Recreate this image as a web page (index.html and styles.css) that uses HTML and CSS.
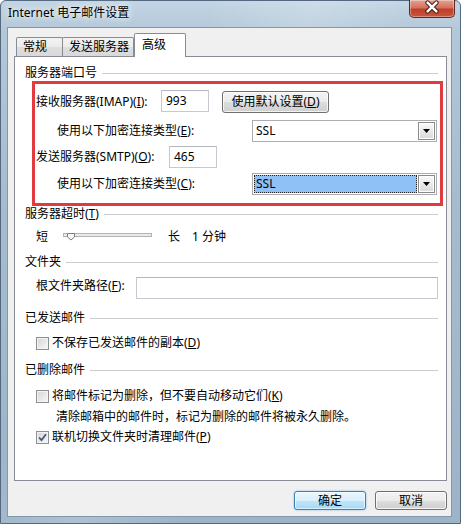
FILE: index.html
```html
<!DOCTYPE html>
<html lang="zh-CN">
<head>
<meta charset="utf-8">
<title>Internet 电子邮件设置</title>
<link rel="stylesheet" href="styles.css">
</head>
<body>
<div class="window">
  <div class="titlebar">
    <span class="title">Internet 电子邮件设置</span>
    <div class="close">
      <svg width="46" height="18" viewBox="0 0 46 18">
        <path d="M19 3.5 L28 12.5 M28 3.5 L19 12.5" stroke="#4a1b14" stroke-width="4.6" stroke-linecap="round"/>
        <path d="M19 3.5 L28 12.5 M28 3.5 L19 12.5" stroke="#ffffff" stroke-width="2.6" stroke-linecap="round"/>
      </svg>
    </div>
  </div>
  <div class="client">
    <div class="tabs">
      <div class="tab t1">常规</div>
      <div class="tab t2">发送服务器</div>
      <div class="tab active">高级</div>
    </div>
    <div class="panel">
      <div class="group-head"><span>服务器端口号</span><i class="rule"></i></div>
      <div class="highlight">
        <div class="row r1">
          <span class="lbl l-imap">接收服务器(IMAP)(<u>I</u>):</span>
          <div class="input short top">993</div>
          <div class="btn defset">使用默认设置(<u>D</u>)</div>
        </div>
        <div class="row r2">
          <span class="lbl l-enc">使用以下加密连接类型(<u>E</u>):</span>
          <div class="select"><span class="val">SSL</span><span class="drop"><svg width="7" height="4" viewBox="0 0 7 4"><path d="M0 0 H7 L3.5 4 Z" fill="#000"/></svg></span></div>
        </div>
        <div class="row r3">
          <span class="lbl l-smtp">发送服务器(SMTP)(<u>O</u>):</span>
          <div class="input short">465</div>
        </div>
        <div class="row r4">
          <span class="lbl l-enc">使用以下加密连接类型(<u>C</u>):</span>
          <div class="select"><span class="val focused">SSL</span><span class="drop"><svg width="7" height="4" viewBox="0 0 7 4"><path d="M0 0 H7 L3.5 4 Z" fill="#000"/></svg></span></div>
        </div>
      </div>

      <div class="group-head"><span>服务器超时(<u>T</u>)</span><i class="rule"></i></div>
      <div class="slider-row">
        <span>短</span>
        <svg class="slider" width="89" height="8" viewBox="0 0 89 8">
          <rect x="0.5" y="0.5" width="88" height="3" fill="#e9e9e9" stroke="#b4b4b4"/>
          <path d="M4.5 0.5 H11.5 V4 L8 7 L4.5 4 Z" fill="#f6f6f6" stroke="#7e7e7e"/>
        </svg>
        <span class="long">长</span>
        <span class="minutes">1 分钟</span>
      </div>

      <div class="group-head gh-folder"><span>文件夹</span><i class="rule"></i></div>
      <div class="folder-row">
        <span class="lbl l-root">根文件夹路径(<u>F</u>):</span>
        <div class="input wide"></div>
      </div>

      <div class="group-head gh-sent"><span>已发送邮件</span><i class="rule"></i></div>
      <div class="check-row cr1"><span class="cb"></span><span>不保存已发送邮件的副本(<u>D</u>)</span></div>

      <div class="group-head gh-del"><span>已删除邮件</span><i class="rule"></i></div>
      <div class="check-row cr2"><span class="cb"></span><span>将邮件标记为删除，但不要自动移动它们(<u>K</u>)</span></div>
      <div class="note">清除邮箱中的邮件时，标记为删除的邮件将被永久删除。</div>
      <div class="check-row cr3"><span class="cb checked"><svg width="11" height="11" viewBox="0 0 11 11"><path d="M2 5.5 L4.5 8.2 L9 2.2" fill="none" stroke="#3b5584" stroke-width="1.8"/></svg></span><span>联机切换文件夹时清理邮件(<u>P</u>)</span></div>
    </div>
    <div class="actions">
      <div class="btn action primary">确定</div>
      <div class="btn action">取消</div>
    </div>
  </div>
</div>
</body>
</html>
```
FILE: styles.css
```css
* { box-sizing: border-box; }
html, body { margin: 0; padding: 0; }
body {
  width: 461px;
  height: 524px;
  overflow: hidden;
  font-family: "Noto Sans", "Noto Sans CJK SC", sans-serif;
  font-size: 12px;
  line-height: 16px;
  color: #000;
}
u { text-decoration: underline; text-underline-offset: 1px; }

.window {
  width: 461px;
  height: 524px;
  display: flex;
  flex-direction: column;
  background:
    linear-gradient(115deg, rgba(255,255,255,0) 30%, rgba(255,255,255,0.18) 45%, rgba(255,255,255,0) 60%),
    linear-gradient(180deg, #c3d5e4 0%, #b2c7d8 6%, #a6bcce 40%, #9db4c8 100%);
  border: 1px solid #54697f;
  border-radius: 6px 6px 0 0;
}

.titlebar {
  height: 26px;
  display: flex;
  justify-content: space-between;
  align-items: flex-start;
}
.title {
  padding: 4px 0 0 7px;
  line-height: 16px;
  text-shadow: 0 0 6px #fff, 0 0 10px rgba(255,255,255,0.8);
}
.close {
  width: 46px;
  height: 18px;
  margin: -1px 5px 0 0;
  border: 1px solid #5d2a22;
  border-top: none;
  border-radius: 0 0 5px 5px;
  background: linear-gradient(180deg, #e6a293 0%, #d3715e 45%, #c0402a 55%, #c8553c 100%);
  box-shadow: inset 0 0 0 1px rgba(255,255,255,0.35);
  display: flex;
}
.close svg { display: block; margin: -1px 0 0 -1px; }

.client {
  height: 490px;
  margin: 0 8px 0 6px;
  background: #f0f0f0;
  border: 1px solid #8396ab;
  padding: 5px 4px 6px 6px;
  display: flex;
  flex-direction: column;
}

.tabs {
  height: 23px;
  display: flex;
  align-items: flex-end;
  padding-left: 2px;
}
.tab {
  height: 19px;
  border: 1px solid #898c95;
  border-bottom: none;
  border-radius: 2px 2px 0 0;
  background: linear-gradient(180deg, #f3f3f3 0%, #ebebeb 50%, #dedede 51%, #d9d9d9 100%);
  line-height: 18px;
  padding-left: 6px;
  white-space: nowrap;
}
.t1 { width: 47px; }
.t2 { width: 72px; margin-left: -1px; }
.tab.active {
  width: 52px;
  height: 24px;
  margin-bottom: -1px;
  background: #fff;
  line-height: 22px;
  padding-left: 7px;
  position: relative;
  z-index: 1;
}

.panel {
  height: 426px;
  background: #fff;
  border: 1px solid #898c95;
  padding-top: 8px;
}

.group-head {
  height: 16px;
  display: flex;
  align-items: center;
  padding: 0 8px 0 10px;
  white-space: nowrap;
}
.rule {
  flex: 1;
  height: 1px;
  margin-left: 5px;
  background: #c9cdd2;
}

.highlight {
  width: 411px;
  margin-left: 17px;
  border: 3px solid #e13b40;
  padding: 6px 0 8px 1px;
}
.row { display: flex; white-space: nowrap; }
.r1 { height: 23px; align-items: center; }
.r2 { height: 22px; margin-top: 7px; align-items: center; }
.r3 { height: 22px; margin-top: 4px; align-items: center; }
.r4 { height: 22px; margin-top: 5px; align-items: center; }
.lbl { display: block; white-space: nowrap; }
.l-imap { width: 125px; }
.l-smtp { width: 133px; }
.l-enc { width: 216px; padding-left: 21px; }

.input {
  height: 22px;
  background: #fff;
  border: 1px solid #c6c9cf;
  border-top-color: #b3b6bd;
  padding: 2px 0 0 4px;
}
.short { width: 48px; }
.r1 .input { align-self: flex-start; }

.btn {
  height: 22px;
  border: 1px solid #707070;
  border-radius: 3px;
  background: linear-gradient(180deg, #f3f3f3 0%, #ebebeb 50%, #dddddd 51%, #cfcfcf 100%);
  box-shadow: inset 0 0 0 1px rgba(255,255,255,0.75);
  display: flex;
  align-items: center;
  justify-content: center;
  white-space: nowrap;
}
.defset { width: 107px; margin-left: 13px; align-self: flex-end; }

.select {
  width: 185px;
  height: 22px;
  border: 1px solid #abadb3;
  background: #fff;
  display: flex;
  align-items: center;
  padding: 1px 1px 1px 1px;
}
.val {
  flex: 1;
  height: 18px;
  line-height: 17px;
  padding-left: 2px;
}
.val.focused {
  background: #8fc1f7;
  outline: 1px dotted #222;
  outline-offset: -1px;
}
.drop {
  width: 17px;
  height: 18px;
  margin-left: 1px;
  border: 1px solid #8a8a8a;
  background: linear-gradient(180deg, #fafafa 0%, #e9e9e9 50%, #d9d9d9 100%);
  box-shadow: inset 0 0 0 1px #fff;
  display: flex;
  align-items: center;
  justify-content: center;
}
.drop svg { display: block; }

.slider-row {
  height: 16px;
  margin-top: 7px;
  padding-left: 21px;
  display: flex;
  align-items: flex-start;
  white-space: nowrap;
}
.slider { display: block; margin: 4px 0 0 15px; }
.long { margin-left: 16px; }
.minutes { margin-left: 12px; }

.gh-folder { margin-top: 9px; }
.folder-row {
  height: 22px;
  margin-top: 7px;
  padding-left: 21px;
  display: flex;
  align-items: flex-start;
}
.l-root { width: 100px; margin-top: 1px; }
.wide { width: 302px; }

.gh-sent { margin-top: 11px; }
.gh-del { margin-top: 11px; }

.check-row {
  height: 16px;
  padding-left: 21px;
  display: flex;
  align-items: center;
  white-space: nowrap;
}
.cr1 { margin-top: 9px; }
.cr2 { margin-top: 10px; }
.cr3 { margin-top: 4px; }
.cb {
  width: 13px;
  height: 13px;
  margin-right: 3px;
  border: 1px solid #8e8f8f;
  background: linear-gradient(135deg, #d4d4d4 0%, #e8e8e8 55%, #f7f7f7 100%);
  box-shadow: inset 0 0 0 1px #f4f4f4;
  display: flex;
  align-items: center;
  justify-content: center;
}
.cb svg { display: block; }
.note {
  height: 16px;
  margin-top: 5px;
  padding-left: 41px;
  white-space: nowrap;
}

.actions {
  margin-top: 10px;
  display: flex;
  justify-content: flex-end;
  gap: 9px;
}
.action { width: 72px; height: 19px; }
.primary {
  border-color: #3c7fb1;
  background: linear-gradient(180deg, #eaf6fd 0%, #d9f0fc 50%, #bee6fd 51%, #a7d9f5 100%);
  box-shadow: inset 0 0 0 1px rgba(255,255,255,0.6), 0 0 2px #6fb6ea;
}
```
